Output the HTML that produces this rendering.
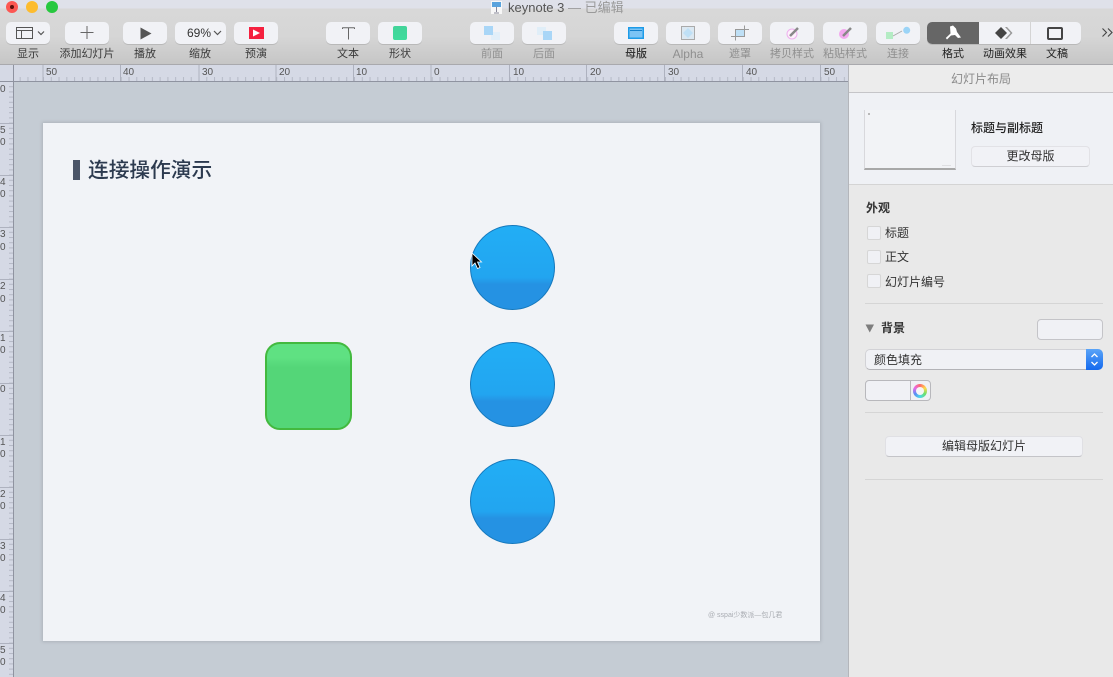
<!DOCTYPE html>
<html lang="zh"><head><meta charset="utf-8"><title>keynote 3</title>
<style>
html,body{margin:0;padding:0;width:1113px;height:677px;overflow:hidden;background:#c5ccd4}
body{position:relative;font-family:"Liberation Sans","Noto Sans CJK SC",sans-serif;color:#333}
div,span,svg{position:absolute;box-sizing:border-box}
.b{top:22px;height:22px;width:44px;background:#f1f2f6;border-radius:5px;box-shadow:0 1px 0 #b9b9b9}
.l{top:46px;height:16px;line-height:16px;font-size:11px;text-align:center;color:#3a3a3a;white-space:nowrap}
.g{color:#8f8f8f}
.t{font-size:12px;line-height:16px;white-space:nowrap;color:#333}
.sep{left:865px;width:238px;height:1px;background:#d5d5d5}
.cb{left:867px;width:14px;height:14px;background:#f0f1f5;border:1px solid #d6d6d6;border-radius:2px}
.rh{top:67px;font-size:10px;line-height:12px;color:#555}
.rv{left:0;width:6px;font-size:10px;line-height:12px;color:#555}
.c{left:470px;width:85px;height:85px;border-radius:50%;border:1.500px solid #1578bc;background:linear-gradient(#22aef5 0,#22a5f0 62%,#2592e3 70%,#2592e3 100%)}
</style></head><body>
<div style="left:0;top:0;width:1113px;height:65px;background:linear-gradient(#dfe1ea 0,#dfe1ea 8px,#d8d8d8 9px,#d6d6d6 36px,#c6c6c6 64px)"></div>
<div style="left:0;top:64px;width:1113px;height:1px;background:#a9a9ad"></div>

<div style="left:6px;top:1px;width:12px;height:12px;border-radius:50%;background:#fc5753"></div>
<div style="left:10px;top:5px;width:4px;height:4px;border-radius:50%;background:#5c0f0c"></div>
<div style="left:26px;top:1px;width:12px;height:12px;border-radius:50%;background:#fdbc2e"></div>
<div style="left:46px;top:1px;width:12px;height:12px;border-radius:50%;background:#27c83f"></div>

<svg style="left:490px;top:0" width="13" height="15"><rect x="1" y="1" width="11" height="13" fill="#f7f7f7"/><rect x="2" y="2" width="9" height="5" fill="#5aa3dd"/><path d="M6.500 7V12M4 13H9" stroke="#889" fill="none"/></svg>
<div style="left:508px;top:0;height:16px;line-height:16px;font-size:13px;color:#555;white-space:nowrap">keynote 3 <span style="position:static;color:#9a9a9a">— 已编辑</span></div>

<!-- toolbar buttons -->
<div class="b" style="left:6px"></div>
<svg style="left:16px;top:27px" width="30" height="13"><path d="M.5 .5H16.500V11.500H.5ZM.5 3.500H16.500M5.500 3.500V11.500" fill="none" stroke="#555"/><path d="M22 4.500L25 7.500L28 4.500" fill="none" stroke="#555" stroke-width="1.200"/></svg>
<div class="l" style="left:6px;width:44px">显示</div>
<div class="b" style="left:65px"></div>
<svg style="left:80px;top:26px" width="14" height="14"><path d="M7 0V13M.5 6.500H13.500" stroke="#666" fill="none"/></svg>
<div class="l" style="left:55px;width:64px">添加幻灯片</div>
<div class="b" style="left:123px"></div>
<svg style="left:140px;top:27px" width="13" height="13"><path d="M.5 .5L11.500 6.500L.5 12.500Z" fill="#555"/></svg>
<div class="l" style="left:123px;width:44px">播放</div>
<div class="b" style="left:175px;width:51px"></div>
<div style="left:187px;top:25px;font-size:12px;line-height:16px;color:#333">69%</div>
<svg style="left:213px;top:29px" width="10" height="8"><path d="M1 2L4.500 5.500L8 2" fill="none" stroke="#555" stroke-width="1.200"/></svg>
<div class="l" style="left:178px;width:44px">缩放</div>
<div class="b" style="left:234px"></div>
<svg style="left:249px;top:27px" width="15" height="12"><rect width="15" height="12" fill="#f5203f"/><path d="M4 2.500L11 6L4 9.500Z" fill="#fff"/></svg>
<div class="l" style="left:234px;width:44px">预演</div>
<div class="b" style="left:326px"></div>
<svg style="left:342px;top:27px" width="13" height="13"><path d="M.5 .8H12.500M6.500 .8V12.500M.5 .5V2M12.500 .5V2" stroke="#666" fill="none"/></svg>
<div class="l" style="left:326px;width:44px">文本</div>
<div class="b" style="left:378px"></div>
<div style="left:393px;top:26px;width:14px;height:14px;border-radius:2px;background:linear-gradient(#42d39a,#3fdc9c)"></div>
<div class="l" style="left:378px;width:44px">形状</div>

<div class="b" style="left:470px"></div>
<div style="left:491px;top:32px;width:9px;height:8px;background:#e2eff9"></div>
<div style="left:484px;top:26px;width:9px;height:9px;background:#a9d6f7"></div>
<div class="l g" style="left:470px;width:44px">前面</div>
<div class="b" style="left:522px"></div>
<div style="left:537px;top:27px;width:9px;height:8px;background:#e0eef8"></div>
<div style="left:543px;top:31px;width:9px;height:9px;background:#a9d6f7"></div>
<div class="l g" style="left:522px;width:44px">后面</div>

<div class="b" style="left:614px"></div>
<svg style="left:628px;top:27px" width="16" height="12"><rect x=".75" y=".75" width="14.500" height="10.500" fill="#7cc4f5" stroke="#1d9be8" stroke-width="1.500"/><path d="M2 3.500H14" stroke="#1580cc"/></svg>
<div class="l" style="left:614px;width:44px;color:#333;font-weight:500">母版</div>
<div class="b" style="left:666px"></div>
<svg style="left:681px;top:26px" width="14" height="14"><rect x=".5" y=".5" width="13" height="13" fill="#dbe8f2" stroke="#aaa"/><path d="M7 2L12 7L7 12L2 7Z" fill="#bfe0f6"/></svg>
<div class="l g" style="left:666px;width:44px;font-size:12px">Alpha</div>
<div class="b" style="left:718px"></div>
<svg style="left:731px;top:25px" width="18" height="16"><rect x="5" y="4" width="9" height="8" fill="#bfe0f6"/><path d="M0 11.500H13.500V.5M4.500 15.500V4.500H18" fill="none" stroke="#999"/></svg>
<div class="l g" style="left:718px;width:44px">遮罩</div>
<div class="b" style="left:770px"></div>
<svg style="left:785px;top:25px" width="16" height="16"><circle cx="7" cy="9" r="5" fill="#fdf0fb" stroke="#eeb0ee"/><path d="M5 11L13 3" stroke="#888" stroke-width="2.500"/></svg>
<div class="l g" style="left:765px;width:54px">拷贝样式</div>
<div class="b" style="left:823px"></div>
<svg style="left:838px;top:25px" width="16" height="16"><circle cx="6" cy="9" r="5" fill="#f3a8ef"/><path d="M5 11L13 3" stroke="#888" stroke-width="2.500"/></svg>
<div class="l g" style="left:818px;width:54px">粘贴样式</div>
<div class="b" style="left:876px"></div>
<svg style="left:885px;top:26px" width="26" height="15"><rect x="1" y="6" width="7" height="7" fill="#b4ecc4"/><path d="M8 10L17 5" stroke="#aaa" fill="none"/><circle cx="21.700" cy="4.300" r="3.500" fill="#9bd4f7"/></svg>
<div class="l g" style="left:876px;width:44px">连接</div>

<div class="b" style="left:927px;width:154px"></div>
<div style="left:927px;top:22px;width:52px;height:22px;background:#666;border-radius:5px 0 0 5px"></div>
<div style="left:1030px;top:22px;width:1px;height:22px;background:#d4d4d4"></div>
<svg style="left:945px;top:25px" width="18" height="16"><path d="M5 1.500L8 .5L11 3.500L12 7L16 12.500L13 13L10 10L6 10.500L2 14.500L.8 13L5.500 8.500Z" fill="#fff"/></svg>
<svg style="left:995px;top:27px" width="18" height="12"><path d="M6 0L12 6L6 12L0 6Z" fill="#444"/><path d="M10 0H12L17.500 6L12 12H10L15.500 6Z" fill="#999"/></svg>
<div style="left:1047px;top:27px;width:16px;height:13px;border:2px solid #444;border-radius:2px"></div>
<div class="l" style="left:931px;width:44px;color:#222">格式</div>
<div class="l" style="left:983px;width:44px;color:#222">动画效果</div>
<div class="l" style="left:1035px;width:44px;color:#222">文稿</div>
<svg style="left:1102px;top:28px" width="11" height="11"><path d="M.5 .5L4.500 4.500L.5 8.500M6 .5L10 4.500L6 8.500" fill="none" stroke="#444" stroke-width="1.100"/></svg>

<!-- rulers -->
<div style="left:0;top:65px;width:849px;height:16px;background:#d5d9e5"></div>
<div style="left:0;top:81px;width:14px;height:596px;background:#d5d9e5"></div>
<div style="left:0;top:81px;width:849px;height:1px;background:#8f93a0"></div>
<div style="left:13px;top:65px;width:1px;height:612px;background:#8f93a0"></div>
<svg style="left:0;top:65px" width="849" height="16" fill="none">
<defs><pattern id="h" x="43" y="0" width="7.775" height="16" patternUnits="userSpaceOnUse"><path d="M.5 12V16" stroke="#b5b9c6"/></pattern></defs>
<rect x="14" width="835" height="16" fill="url(#h)"/>
<path d="M43 0V16M120.500 0V16M199 0V16M276 0V16M353.500 0V16M431 0V16M509.500 0V16M586.500 0V16M664.500 0V16M742.500 0V16M820.500 0V16" stroke="#aeb2bf"/>
</svg>
<svg style="left:0;top:82px" width="13" height="595" fill="none">
<defs><pattern id="v" x="0" y="-1" width="13" height="5.200" patternUnits="userSpaceOnUse"><path d="M9 .5H13" stroke="#b5b9c6"/></pattern></defs>
<rect width="13" height="595" fill="url(#v)"/>
<path d="M0 41.500H13M0 93.500H13M0 145.500H13M0 197.500H13M0 249.500H13M0 301.500H13M0 353.500H13M0 405.500H13M0 457.500H13M0 509.500H13M0 561.500H13" stroke="#aeb2bf"/>
</svg>
<div class="rh" style="left:46px">50</div><div class="rh" style="left:123px">40</div><div class="rh" style="left:202px">30</div><div class="rh" style="left:279px">20</div><div class="rh" style="left:356px">10</div><div class="rh" style="left:434px">0</div><div class="rh" style="left:513px">10</div><div class="rh" style="left:590px">20</div><div class="rh" style="left:668px">30</div><div class="rh" style="left:746px">40</div><div class="rh" style="left:824px">50</div>
<div class="rv" style="top:84px">0</div>
<div class="rv" style="top:125px">5</div><div class="rv" style="top:137px">0</div>
<div class="rv" style="top:177px">4</div><div class="rv" style="top:189px">0</div>
<div class="rv" style="top:229px">3</div><div class="rv" style="top:242px">0</div>
<div class="rv" style="top:281px">2</div><div class="rv" style="top:294px">0</div>
<div class="rv" style="top:333px">1</div><div class="rv" style="top:345px">0</div>
<div class="rv" style="top:384px">0</div>
<div class="rv" style="top:437px">1</div><div class="rv" style="top:449px">0</div>
<div class="rv" style="top:489px">2</div><div class="rv" style="top:501px">0</div>
<div class="rv" style="top:541px">3</div><div class="rv" style="top:553px">0</div>
<div class="rv" style="top:593px">4</div><div class="rv" style="top:605px">0</div>
<div class="rv" style="top:645px">5</div><div class="rv" style="top:657px">0</div>

<!-- slide -->
<div style="left:43px;top:123px;width:777px;height:518px;background:#f1f3f7;box-shadow:0 0 3px 1px #adb3bb"></div>
<div style="left:73px;top:160px;width:7px;height:20px;background:#4b5568"></div>
<div style="left:88px;top:156px;height:30px;line-height:30px;font-size:20.700px;font-weight:500;color:#2c3a4f;white-space:nowrap">连接操作演示</div>
<div style="left:265px;top:342px;width:87px;height:88px;border-radius:15px;border:2px solid #43b93f;background:linear-gradient(#5fe182 0,#5fe182 16%,#54d678 28%,#54d678 100%)"></div>
<div class="c" style="top:225px"></div>
<div class="c" style="top:342px"></div>
<div class="c" style="top:459px"></div>
<svg style="left:471px;top:252px" width="12" height="18"><path d="M1 1V14L4 11L6.500 16.500L9 15.500L6.500 10H10.500Z" fill="#000" stroke="#fff" stroke-width=".8"/></svg>
<div style="left:708px;top:611px;height:10px;line-height:10px;font-size:7px;color:#a9acb2;white-space:nowrap">@ sspai少数派—包几君</div>

<!-- panel -->
<div style="left:848px;top:65px;width:265px;height:612px;background:#e9e9e9;border-left:1px solid #b4b6bb"></div>
<div style="left:849px;top:65px;width:264px;height:28px;background:#ececec;border-bottom:1px solid #c5c5c8;text-align:center;font-size:12px;line-height:28px;color:#8a8a8a">幻灯片布局</div>
<div style="left:849px;top:93px;width:264px;height:92px;background:#eff1f5;border-bottom:1px solid #d4d4d4"></div>
<div style="left:864px;top:110px;width:92px;height:60px;background:#f2f3f6;border:1px solid #d8d8dc;border-top:0;border-bottom:2px solid #a8a8a8"></div>
<div style="left:868px;top:113px;width:2px;height:2px;background:#b8b8b8"></div>
<div style="left:942px;top:165px;width:9px;height:1px;background:#dfdfe2"></div>
<div class="t" style="left:971px;top:120px;font-weight:500;color:#222">标题与副标题</div>
<div style="left:971px;top:146px;width:119px;height:21px;background:#f1f2f6;border:1px solid #e2e2e6;border-bottom:1px solid #cfcfd3;border-radius:4px;text-align:center;font-size:12px;line-height:19px;color:#333">更改母版</div>

<div class="t" style="left:866px;top:200px;font-weight:700;color:#333">外观</div>
<div class="cb" style="top:226px"></div><div class="t" style="left:885px;top:225px">标题</div>
<div class="cb" style="top:250px"></div><div class="t" style="left:885px;top:249px">正文</div>
<div class="cb" style="top:274px"></div><div class="t" style="left:885px;top:274px">幻灯片编号</div>
<div class="sep" style="top:303px"></div>
<svg style="left:865px;top:324px" width="10" height="9"><path d="M.5 .5H9L4.750 8.500Z" fill="#7d7d7d"/></svg>
<div class="t" style="left:881px;top:320px;font-weight:700;color:#333">背景</div>
<div style="left:1037px;top:319px;width:66px;height:21px;background:#f0f1f5;border:1px solid #c4c4c8;border-radius:4px"></div>
<div style="left:865px;top:349px;width:238px;height:21px;background:#f0f1f5;border:1px solid #d2d2d6;border-bottom-color:#b3b3b7;border-radius:5px"></div>
<div class="t" style="left:874px;top:352px">颜色填充</div>
<div style="left:1086px;top:349px;width:17px;height:21px;background:linear-gradient(#5aa4f8,#1469ee);border-radius:0 5px 5px 0"></div>
<svg style="left:1089px;top:351px" width="11" height="17"><path d="M2.500 6L5.500 3L8.500 6M2.500 11L5.500 14L8.500 11" fill="none" stroke="#fff" stroke-width="1.300"/></svg>
<div style="left:865px;top:380px;width:66px;height:21px;background:#f0f1f5;border:1px solid #b8b8bc;border-radius:4px"></div>
<div style="left:910px;top:380px;width:1px;height:21px;background:#b8b8bc"></div>
<div style="left:913px;top:383.500px;width:14px;height:14px;border-radius:50%;background:conic-gradient(#ff6a6a,#ffd84a,#6be06b,#4ad8e8,#5a8cf5,#e86ae8,#ff6a6a)"></div>
<div style="left:916px;top:386.500px;width:8px;height:8px;border-radius:50%;background:#f6f6f6"></div>
<div class="sep" style="top:412px"></div>
<div style="left:885px;top:436px;width:198px;height:21px;background:#f1f2f6;border:1px solid #e0e0e4;border-bottom:1px solid #c4c4c8;border-radius:4px;text-align:center;font-size:12px;line-height:19px;color:#333">编辑母版幻灯片</div>
<div class="sep" style="top:479px"></div>
</body></html>
